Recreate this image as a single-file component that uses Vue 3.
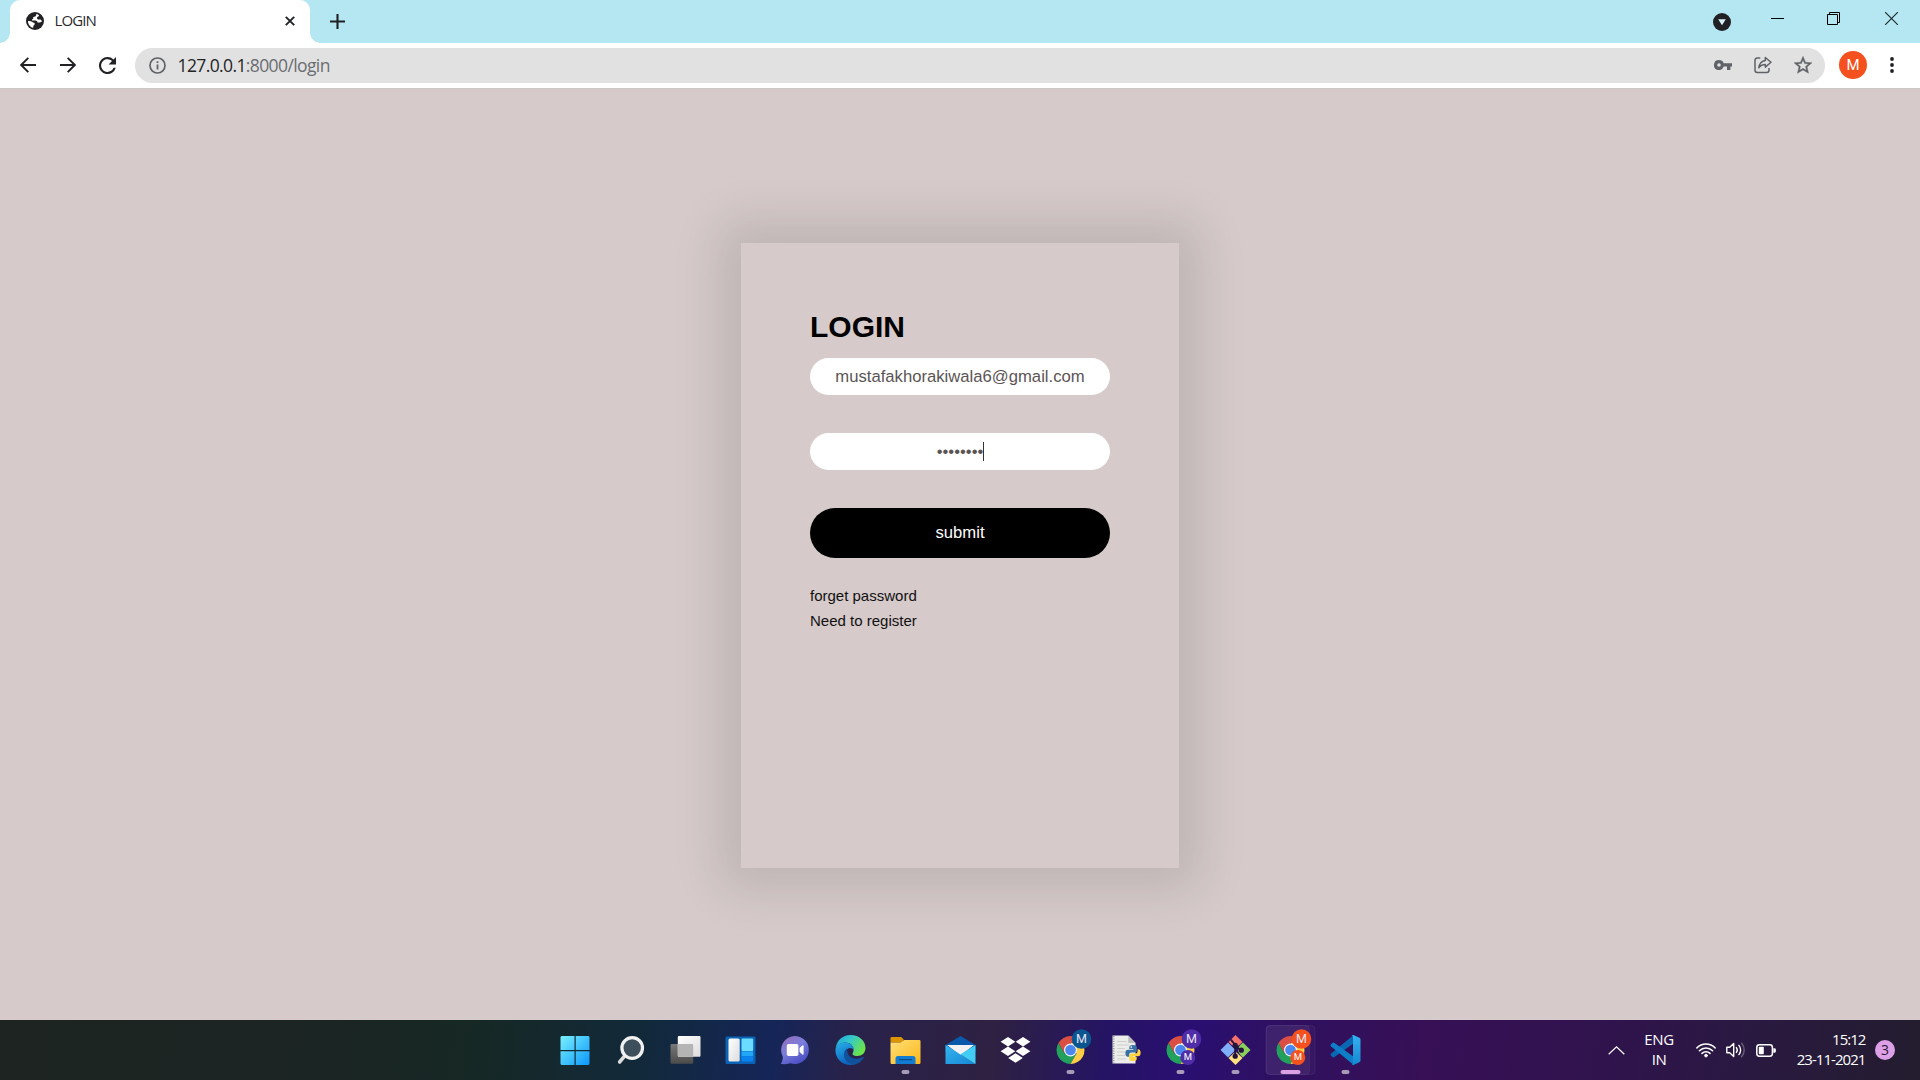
<script setup>
import { ref } from 'vue'

const email = ref('mustafakhorakiwala6@gmail.com')
const bullets = '••••••••'

const apps = [
  { id: 'start' },
  { id: 'search' },
  { id: 'taskview' },
  { id: 'widgets' },
  { id: 'chat' },
  { id: 'edge' },
  { id: 'files', open: true },
  { id: 'mail' },
  { id: 'dropbox' },
  { id: 'chrome', open: true, badge: '#0b5591' },
  { id: 'python' },
  { id: 'chrome', open: true, badge: '#4f2da8', second: true },
  { id: 'git', open: true },
  { id: 'chrome', open: true, active: true, badge: '#f4511e', second: true },
  { id: 'vscode', open: true },
]
</script>

<template>
  <div class="screen">
    <header class="tabstrip">
      <div class="tab">
        <svg class="favicon" width="18" height="18" viewBox="0 0 18 18">
          <circle cx="9" cy="9" r="9" fill="#202124" />
          <path d="M10.2 2.1C10.6 3.7 9.6 4.6 8.2 4.8 7.2 5 7 5.6 7.2 6.3 7.4 7 6.8 7.3 6 7.3V8.6H9.2C10.6 8.6 11.4 9.3 11.5 10.5H13.2C13.9 10.5 14.6 10.1 15.9 9.4 15.6 7.8 14.6 7.3 13.4 7.4 12.3 7.5 11.2 7.3 11 6.2 10.9 5.3 11.6 4.9 12.3 4.6 13 4.2 13 3.5 12.8 3.1 12 2.5 11.1 2.2 10.2 2.1Z" fill="#fff" />
          <path d="M2 8.9C3.2 8.8 5 9 6.4 10 7.4 10.7 8.9 10.7 8.8 12 8.7 13 7.5 13 7.4 14 7.3 14.8 7.4 15.3 7 15.8 4.2 14.9 1.9 12.2 2 8.9Z" fill="#fff" />
        </svg>
        <span class="tab-title">LOGIN</span>
        <svg width="10" height="10" viewBox="0 0 10 10"><path d="M.8.8 9.2 9.2M9.2.8.8 9.2" stroke="#202124" stroke-width="1.9" /></svg>
      </div>
      <svg class="plus" width="15" height="15" viewBox="0 0 15 15"><path d="M7.5 0V15M0 7.5H15" stroke="#202124" stroke-width="2.1" /></svg>
      <div class="window-controls">
        <svg class="search-tabs" width="18" height="18" viewBox="0 0 18 18"><circle cx="9" cy="9" r="9" fill="#202124" /><path d="M5.2 6.3H12.8L9 12.3Z" fill="#d8f3f8" /></svg>
        <svg class="minimize" width="13" height="13" viewBox="0 0 13 13"><path d="M0 6.5H13" stroke="#000" /></svg>
        <svg class="restore" width="13" height="13" viewBox="0 0 13 13"><path d="M.5 2.5H10.5V12.5H.5ZM2.5 2.5V.5H12.5V10.5H10.5" fill="none" stroke="#000" /></svg>
        <svg class="close" width="13" height="13" viewBox="0 0 13 13"><path d="M0 0 13 13M13 0 0 13" stroke="#1c2527" stroke-width="1.1" /></svg>
      </div>
    </header>

    <nav class="toolbar">
      <svg width="16" height="16" viewBox="0 0 16 16"><path d="M16 8H1.5M8.3.8 1.2 8 8.3 15.2" fill="none" stroke="#202124" stroke-width="1.9" /></svg>
      <svg width="16" height="16" viewBox="0 0 16 16"><path d="M0 8H14.5M7.7.8 14.8 8 7.7 15.2" fill="none" stroke="#202124" stroke-width="1.9" /></svg>
      <svg class="reload" width="17" height="17" viewBox="0 0 16 16"><path d="M13.65 2.35A7.96 7.96 0 0 0 8 0a8 8 0 1 0 7.73 10h-2.08A6 6 0 1 1 8 2c1.66 0 3.14.69 4.22 1.78L9 7h7V0z" fill="#202124" /></svg>
      <div class="omnibox">
        <svg width="17" height="17" viewBox="0 0 17 17"><circle cx="8.5" cy="8.5" r="7.5" fill="none" stroke="#5f6368" stroke-width="1.7" /><path d="M8.5 7.6V12.6M8.5 4.3V6.1" stroke="#5f6368" stroke-width="1.8" /></svg>
        <span class="url"><b>127.0.0.1</b>:8000/login</span>
        <div class="omni-actions">
          <svg width="18" height="10" viewBox="0 0 18 10"><path fill-rule="evenodd" d="M5 0A5 5 0 0 1 9.7 3.3H18V6.6H16.4V10H13V6.6H9.7A5 5 0 1 1 5 0ZM5 3.2A1.8 1.8 0 1 0 5 6.8 1.8 1.8 0 0 0 5 3.2Z" fill="#5f6368" /></svg>
          <svg width="18" height="18" viewBox="0 0 18 18"><path d="M6.3 2H3.2A2.2 2.2 0 0 0 1 4.2V14.3A2.2 2.2 0 0 0 3.2 16.5H12.8A2.2 2.2 0 0 0 15 14.3V12" fill="none" stroke="#5f6368" stroke-width="1.5" /><path d="M11.3 1.5 17 6.3 11.3 11.1V8.4C8.5 8.4 6.4 9.3 4.8 11.8 5.3 8 7.3 5 11.3 4.4Z" fill="none" stroke="#5f6368" stroke-width="1.5" stroke-linejoin="round" /></svg>
          <svg width="18" height="18" viewBox="2 2 20 19.5"><path d="M22 9.24l-7.19-.62L12 2 9.19 8.63 2 9.24l5.46 4.73L5.82 21 12 17.27 18.18 21l-1.63-7.03L22 9.24zM12 15.4l-3.76 2.27 1-4.28-3.32-2.88 4.38-.38L12 6.1l1.71 4.04 4.38.38-3.32 2.88 1 4.28L12 15.4z" fill="#5f6368" stroke="#5f6368" stroke-width=".4" /></svg>
        </div>
      </div>
      <div class="avatar">M</div>
      <svg class="dots" width="4" height="16" viewBox="0 0 4 16" fill="#202124"><circle cx="2" cy="2" r="1.9" /><circle cx="2" cy="8" r="1.9" /><circle cx="2" cy="14" r="1.9" /></svg>
    </nav>

    <main class="page">
      <form class="card" @submit.prevent>
        <h1>LOGIN</h1>
        <div class="field">{{ email }}</div>
        <div class="field"><span>{{ bullets }}</span><i class="caret"></i></div>
        <button type="submit">submit</button>
        <a>forget password</a>
        <a>Need to register</a>
      </form>
    </main>

    <footer class="taskbar">
      <div class="apps">
        <svg v-for="(app, i) in apps" :key="i" width="55" height="60" viewBox="0 0 55 60">
          <defs v-if="i === 0">
            <linearGradient id="gWin" gradientUnits="userSpaceOnUse" x1="13" y1="16" x2="43" y2="45"><stop offset="0" stop-color="#7af2ff" /><stop offset="1" stop-color="#0b96fb" /></linearGradient>
            <linearGradient id="gWhite" x1="0" y1="0" x2="1" y2="1"><stop offset="0" stop-color="#fff" /><stop offset="1" stop-color="#dcdcdc" /></linearGradient>
            <linearGradient id="gGrey" x1="0" y1="0" x2="0" y2="1"><stop offset="0" stop-color="#777" /><stop offset="1" stop-color="#4b4b4b" /></linearGradient>
            <linearGradient id="gChat" x1="0" y1="0" x2=".6" y2="1"><stop offset="0" stop-color="#9a68b4" /><stop offset=".5" stop-color="#7b7fdc" /><stop offset="1" stop-color="#4b4fc4" /></linearGradient>
            <linearGradient id="gEdgeTop" x1="0" y1="0" x2="1" y2=".5"><stop offset="0" stop-color="#1aa6e0" /><stop offset=".5" stop-color="#36c8c8" /><stop offset="1" stop-color="#6be34b" /></linearGradient>
            <linearGradient id="gEdge" x1="0" y1="0" x2=".4" y2="1"><stop offset="0" stop-color="#27b0ea" /><stop offset="1" stop-color="#0d63bd" /></linearGradient>
            <linearGradient id="gFolder" x1="0" y1="0" x2="1" y2="1"><stop offset="0" stop-color="#ffe07a" /><stop offset="1" stop-color="#fbb616" /></linearGradient>
            <linearGradient id="gMail" x1="0" y1="0" x2="1" y2="1"><stop offset="0" stop-color="#35b5f0" /><stop offset="1" stop-color="#1686d4" /></linearGradient>
            <linearGradient id="gCode" x1="0" y1="0" x2="0" y2="1"><stop offset="0" stop-color="#35b0f2" /><stop offset="1" stop-color="#1688d2" /></linearGradient>
          </defs>

          <g v-if="app.active">
            <rect x="4" y="5.5" width="49" height="49" rx="4" fill="#fff" fill-opacity=".03" stroke="#fff" stroke-opacity=".06" />
            <rect x="4" y="5.5" width="43.5" height="49" rx="4" fill="#fff" fill-opacity=".05" stroke="#fff" stroke-opacity=".05" />
          </g>

          <g v-if="app.id === 'start'" fill="url(#gWin)">
            <path d="M14.5 16H27.5V30H13.5V17ZM28.7 16H41.5L42.5 17V30H28.7ZM13.5 31.2H27.5V45H14.5L13.5 44ZM28.7 31.2H42.5V44L41.5 45H28.7Z" />
          </g>

          <g v-else-if="app.id === 'search'">
            <path d="M23.2 35.4 17.6 42" stroke="#dcdcdc" stroke-width="3.6" stroke-linecap="round" />
            <circle cx="30.2" cy="28" r="10.3" fill="#3c4f5b" stroke="#f1f1f1" stroke-width="3.2" />
          </g>

          <g v-else-if="app.id === 'taskview'">
            <rect x="13.5" y="24" width="22.7" height="19.8" rx="1" fill="url(#gGrey)" />
            <rect x="20.8" y="16" width="22.7" height="20.8" rx="1" fill="url(#gWhite)" />
            <path d="M20.8 24H35.2A1 1 0 0 1 36.2 25V36.8H21.8A1 1 0 0 1 20.8 35.8Z" fill="#b4b4b4" />
          </g>

          <g v-else-if="app.id === 'widgets'">
            <rect x="13.5" y="16.5" width="30" height="27.5" rx="1.3" fill="#0c62b4" />
            <rect x="16.5" y="18.5" width="11.2" height="23" rx="1.5" fill="url(#gWhite)" />
            <rect x="29.5" y="18.5" width="11.7" height="12.5" rx="1" fill="#6bdcff" />
            <rect x="29.5" y="31.3" width="11.7" height="5" fill="#22a6f8" />
            <rect x="29.5" y="36.3" width="11.7" height="5.2" rx="1" fill="#0a83ee" />
          </g>

          <g v-else-if="app.id === 'chat'">
            <path d="M28.2 16A14 14 0 1 1 23.5 43.3C20 44.2 17 44.3 13.8 44 15.3 41.6 15.8 39.6 15.8 36.7A14 14 0 0 1 28.2 16Z" fill="url(#gChat)" />
            <rect x="19.8" y="24" width="11.6" height="12" rx="1.8" fill="#fff" />
            <path d="M32.6 28 35.4 25.5Q36.6 25 36.6 26.3V33.7Q36.6 35 35.4 34.5L32.6 32Z" fill="#fff" />
          </g>

          <g v-else-if="app.id === 'edge'">
            <path d="M13.6 29C14.4 20.5 20.5 15 28.6 15 37.5 15 43.5 21 43.5 28 43.5 33 39.8 36 35.3 36 31.6 36 29.8 34.6 30.8 33 32.8 30 31.3 23 23.6 22.6 18.6 22.4 14.8 25.3 13.6 29Z" fill="url(#gEdgeTop)" />
            <path d="M13.5 30C13.8 25.5 18 22.4 23.2 22.6 28.8 22.8 32.2 26.6 31.7 30.4 30 26.9 25.8 27.3 24.2 30.5 21.6 35.5 25.5 42.8 32.4 44.3 21.8 47.2 13.2 39.5 13.5 30Z" fill="url(#gEdge)" />
            <path d="M24.8 28.6C19.5 32.5 21.4 43.1 31.3 44.7 36 44.3 39.5 41.3 41.7 37.7 42 37.1 41.5 36.7 41 37 33.5 40.7 25.8 37.8 25.3 31.3Z" fill="#11529c" />
          </g>

          <g v-else-if="app.id === 'files'">
            <path d="M13.5 18.2Q13.5 17 14.7 17H24.2L26.4 19.3V22.5H13.5Z" fill="#dc9400" />
            <path d="M13.5 22.4H23.8L27.2 20H42.3Q43.5 20 43.5 21.2V42.8Q43.5 44 42.3 44H14.7Q13.5 44 13.5 42.8Z" fill="url(#gFolder)" />
            <path d="M18.5 44V38.5Q18.5 36 21 36H36Q38.5 36 38.5 38.5V44Z" fill="#137cd0" />
            <path d="M22 39.6H35" stroke="#084d8a" stroke-width="1.2" />
          </g>

          <g v-else-if="app.id === 'mail'">
            <path d="M13.5 25 28.5 16 43.5 25V32H13.5Z" fill="#0a59ad" />
            <path d="M15 25H42L28.5 35.5Z" fill="#f2f2f2" />
            <path d="M13.5 25 28 34.2 43.5 44H13.5Z" fill="url(#gMail)" />
            <path d="M43.5 25V44L27.2 33.8 28.5 34.2Z" fill="#42cdf6" />
          </g>

          <g v-else-if="app.id === 'dropbox'" fill="#fff">
            <path d="M21 17 28.3 21.7 21 26.4 13.6 21.7ZM36 17 43.4 21.7 36 26.4 28.7 21.7ZM21 26.6 28.3 31.3 21 36 13.6 31.3ZM36 26.6 43.4 31.3 36 36 28.7 31.3ZM28.5 33.3 35.8 38 28.5 42.7 21.2 38Z" />
          </g>

          <g v-else-if="app.id === 'chrome'">
            <g transform="translate(28.5 30)">
              <path d="M-12.12-7A14 14 0 0 1 12.12-7H0L-6.06 3.5Z" fill="#d94f43" />
              <path d="M-12.12-7A14 14 0 0 0 0 14L6.06 3.5-6.06 3.5Z" fill="#22a15d" />
              <path d="M12.12-7A14 14 0 0 1 0 14L6.06 3.5 0-7Z" fill="#ffce45" />
              <circle r="6.5" fill="#eef3fb" />
              <circle r="5.3" fill="#4a88ee" />
            </g>
            <circle cx="39.5" cy="19" r="9.8" :fill="app.badge" />
            <text class="m-big" x="39.5" y="23.1" text-anchor="middle">M</text>
            <template v-if="app.second">
              <circle cx="35.8" cy="37.4" r="7.5" :fill="app.badge" />
              <text class="m-small" x="35.8" y="40.4" text-anchor="middle">M</text>
            </template>
          </g>

          <g v-else-if="app.id === 'python'">
            <path d="M15.5 15.5H31.3L38.5 23V43.5H15.5Z" fill="#ececea" />
            <path d="M31.3 15.5V23H38.5Z" fill="#bdbdbb" />
            <path d="M20 21.5H30M20 25H32M20 28.5H28M20 32H28M20 35.5H28M20 39H29" stroke="#cfcfce" stroke-width="1" />
            <path d="M16.8 16V43.5" stroke="#777" stroke-width="1" stroke-dasharray="1.2 1.2" />
            <path d="M36 25C33 25 32.3 26 32.3 27.3V29H36.3V29.8H31C29 29.8 28.4 31.3 28.4 33.3 28.4 35.4 29.2 36.8 30.8 36.8H32.2V34.8C32.2 33.4 33.3 32.5 34.6 32.5H37.8C39 32.5 39.8 31.6 39.8 30.5V27.3C39.8 25.8 38.6 25 36 25Z" fill="#3672a4" />
            <path d="M36 41C39 41 39.7 40 39.7 38.7V37H35.7V36.2H41C43 36.2 43.6 34.7 43.6 32.7 43.6 30.6 42.8 29.2 41.2 29.2H40.6V31.2C40.6 32.6 39.5 33.5 38.2 33.5H34.6C33.2 33.5 32.2 34.4 32.2 35.5V38.7C32.2 40.2 33.4 41 36 41Z" fill="#ffd43d" />
            <circle cx="34.2" cy="27.1" r=".8" fill="#fff" />
          </g>

          <g v-else-if="app.id === 'git'">
            <path d="M28.5 15 35.5 22Q32 26.2 28.5 27 25 26.2 21.5 22Z" fill="#f4716d" />
            <path d="M36 22.6 43.5 30 36 37.4Q31.5 34 31 30 31.5 26 36 22.6Z" fill="#8cd05c" />
            <path d="M21 22.6 28 29.6V30.4L21 37.4 13.5 30Z" fill="#80aef8" />
            <path d="M28.5 31.5 35.5 38 28.5 45 21.5 38Z" fill="#ffe27e" />
            <path d="M23.8 19.5 28.2 25V37M28.2 26 34 30.2" fill="none" stroke="#24133b" stroke-width="2" />
            <circle cx="28.2" cy="25.3" r="2.6" fill="#24133b" />
            <circle cx="28.2" cy="36.2" r="2.6" fill="#24133b" />
            <circle cx="34.3" cy="30.2" r="2.6" fill="#24133b" />
          </g>

          <g v-else-if="app.id === 'vscode'">
            <path d="M13.9 33.8 36.4 15.2V23.4L17.2 37.3Q16.5 37.7 15.8 37.2L13.9 35.6Q13 34.7 13.9 33.8Z" fill="#0869b2" />
            <path d="M13.9 26.2 36.4 44.8V36.6L17.2 22.7Q16.5 22.3 15.8 22.8L13.9 24.4Q13 25.3 13.9 26.2Z" fill="#0f7ec9" />
            <path d="M36.4 15 42.4 17.7Q43.5 18.2 43.5 19.4V40.6Q43.5 41.8 42.4 42.3L36.4 45Q35.4 45.2 34.7 44.5 36 44.6 36 43V17Q36 15.4 34.7 15.5 35.4 14.8 36.4 15Z" fill="url(#gCode)" />
          </g>

          <rect v-if="app.active" x="18.5" y="50" width="20" height="4" rx="2" fill="#dda0e3" />
          <rect v-else-if="app.open" x="24.5" y="50" width="8" height="4" rx="2" fill="#a79bb8" />
        </svg>
      </div>

      <div class="tray">
        <svg class="chevron" width="17" height="9" viewBox="0 0 17 9"><path d="M.7 8.3 8.5.9 16.3 8.3" fill="none" stroke="#fff" stroke-width="1.2" /></svg>
        <div class="lang"><span>ENG</span><span>IN</span></div>
        <svg class="wifi" width="20" height="16" viewBox="0 0 20 16" fill="none" stroke="#fff" stroke-width="1.5" stroke-linecap="round"><path d="M.9 5.9A12.8 12.8 0 0 1 19.1 5.9M3.4 8.7A9.3 9.3 0 0 1 16.6 8.7M6 11.4A5.7 5.7 0 0 1 14 11.4" /><circle cx="10" cy="13.6" r="1.4" fill="#fff" stroke-width=".8" /></svg>
        <svg class="sound" width="20" height="16" viewBox="0 0 20 16" fill="none" stroke="#fff" stroke-width="1.4" stroke-linecap="round"><path d="M.8 5.3H3.7L7.7 1.5V14.5L3.7 10.7H.8Z" stroke-linejoin="round" /><path d="M10.4 5.6A4 4 0 0 1 10.4 10.4M12.9 3.4A7 7 0 0 1 12.9 12.6" /><path d="M15.6 1.3A10 10 0 0 1 15.6 14.7" stroke-opacity=".3" /></svg>
        <svg class="battery" width="20" height="13" viewBox="0 0 20 13"><rect x=".8" y=".8" width="15.6" height="11.4" rx="2.6" fill="none" stroke="#fff" stroke-width="1.5" /><rect x="2.8" y="2.8" width="5" height="7.4" rx=".8" fill="#fff" /><path d="M17.3 4.3H18.3Q19.8 4.3 19.8 5.5V7.5Q19.8 8.7 18.3 8.7H17.3Z" fill="#fff" /></svg>
        <div class="clock"><span class="time">15:12</span><span>23-11-2021</span></div>
        <div class="count">3</div>
      </div>
    </footer>
  </div>
</template>

<style>
body {
  margin: 0;
  overflow: hidden;
}
</style>

<style scoped>
.screen {
  width: 1920px;
  height: 1080px;
  display: flex;
  flex-direction: column;
  font-family: "Open Sans", "Noto Sans", sans-serif;
  overflow: hidden;
}
svg {
  display: block;
  flex: none;
}

/* Tab strip */
.tabstrip {
  height: 43px;
  flex: none;
  display: flex;
  background: #b4e7f2;
  padding-left: 10px;
}
.tab {
  position: relative;
  width: 300px;
  height: 43px;
  box-sizing: border-box;
  display: flex;
  align-items: center;
  padding: 0 15px 1px 16px;
  background: #fff;
  border-radius: 10px 10px 0 0;
}
.tab::before,
.tab::after {
  content: "";
  position: absolute;
  bottom: 0;
  width: 10px;
  height: 10px;
}
.tab::before {
  left: -10px;
  background: radial-gradient(circle at 0 0, transparent 9.5px, #fff 10px);
}
.tab::after {
  right: -10px;
  background: radial-gradient(circle at 100% 0, transparent 9.5px, #fff 10px);
}
.tab-title {
  flex: 1;
  margin: -2px 0 0 10.5px;
  font-size: 15px;
  line-height: 20px;
  font-weight: 400;
  letter-spacing: -0.9px;
  color: #2a2a2d;
}
.plus {
  margin: 14px 0 0 20px;
}
.window-controls {
  margin-left: auto;
  margin-right: 22px;
  padding-top: 12px;
  display: flex;
}
.search-tabs {
  margin-top: 0.5px;
}
.minimize {
  margin-left: 40px;
}
.restore {
  margin-left: 43px;
}
.close {
  margin-left: 45px;
}

/* Toolbar */
.toolbar {
  height: 46px;
  flex: none;
  box-sizing: border-box;
  display: flex;
  align-items: center;
  gap: 24px;
  padding: 0 26px 1px 19.5px;
  background: #fff;
  border-bottom: 1px solid #cdc8c8;
}
.reload {
  margin-left: -0.5px;
}
.omnibox {
  flex: 1;
  height: 35px;
  margin-left: -5.5px;
  display: flex;
  align-items: center;
  box-sizing: border-box;
  padding: 0 13.5px 0 14px;
  border-radius: 18px;
  background: #e1e1e1;
}
.url {
  margin-left: 12px;
  font-size: 17.5px;
  line-height: 24px;
  letter-spacing: -0.61px;
  font-weight: 400;
  color: #6a6d71;
}
.url b {
  font-weight: 400;
  color: #242527;
}
.omni-actions {
  margin-left: auto;
  display: flex;
  align-items: center;
  gap: 22px;
}
.avatar {
  width: 28px;
  height: 28px;
  margin-left: -10px;
  border-radius: 50%;
  background: #f4511e;
  color: #fff;
  font: 15px/28px Roboto, sans-serif;
  text-align: center;
}
.dots {
  margin-left: -1px;
}

/* Page */
.page {
  flex: 1;
  display: flex;
  justify-content: center;
  align-items: flex-start;
  background: #d6caca;
  padding-top: 154px;
  font-family: "Liberation Sans", Arial, sans-serif;
}
.card {
  width: 438px;
  height: 625px;
  box-sizing: border-box;
  padding: 66px 69px 0;
  display: flex;
  flex-direction: column;
  background: #d6caca;
  box-shadow: 0 0 46px 19px rgba(12, 24, 12, 0.125);
}
h1 {
  margin: 0 0 14px;
  font-size: 30px;
  line-height: 35px;
  font-weight: 700;
  color: #000;
}
.field {
  height: 37px;
  margin-bottom: 38px;
  border-radius: 18.5px;
  background: #fff;
  color: #5b5454;
  font-size: 16.667px;
  display: flex;
  align-items: center;
  justify-content: center;
}
.caret {
  width: 1px;
  height: 19px;
  margin-right: -1px;
  background: #333;
}
button {
  height: 50px;
  margin: 0 0 25px;
  padding: 0;
  border: 0;
  border-radius: 25px;
  background: #000;
  color: #fff;
  font: 16.667px "Liberation Sans", Arial, sans-serif;
}
a {
  font-size: 15px;
  line-height: 25px;
  color: #111;
}

/* Taskbar */
.taskbar {
  height: 60px;
  flex: none;
  display: flex;
  padding-left: 547.4px;
  background: linear-gradient(
    96deg,
    #1d2422 0,
    #1b2523 330px,
    #162825 480px,
    #12293a 640px,
    #152558 770px,
    #29224a 850px,
    #2e2142 990px,
    #251463 1100px,
    #2a0f72 1185px,
    #2f1060 1280px,
    #371056 1420px,
    #30134d 1600px,
    #291940 1750px,
    #231d2e 1920px
  );
}
.apps {
  display: flex;
}
.m-big {
  font: 12.5px Roboto, sans-serif;
  fill: #e8e4f4;
}
.m-small {
  font: 9.5px Roboto, sans-serif;
  fill: #fff;
}
.tray {
  flex: 1;
  display: flex;
  align-items: center;
  justify-content: flex-end;
  padding-right: 25px;
  color: #fff;
  font-size: 15px;
  line-height: 20px;
}
.lang,
.clock {
  display: flex;
  flex-direction: column;
  padding-bottom: 2px;
}
.lang {
  align-items: center;
  width: 40px;
  margin: 0 17px 0 14px;
  letter-spacing: -0.4px;
}
.clock {
  align-items: flex-end;
  width: 70px;
  margin: 0 9.5px 0 19.5px;
  letter-spacing: -0.95px;
  white-space: nowrap;
}
.sound {
  margin: 0 10px;
}
.count {
  width: 20px;
  height: 20px;
  border-radius: 50%;
  background: #dda0e6;
  color: #2a1a35;
  font-size: 14px;
  line-height: 20px;
  text-align: center;
}
</style>
